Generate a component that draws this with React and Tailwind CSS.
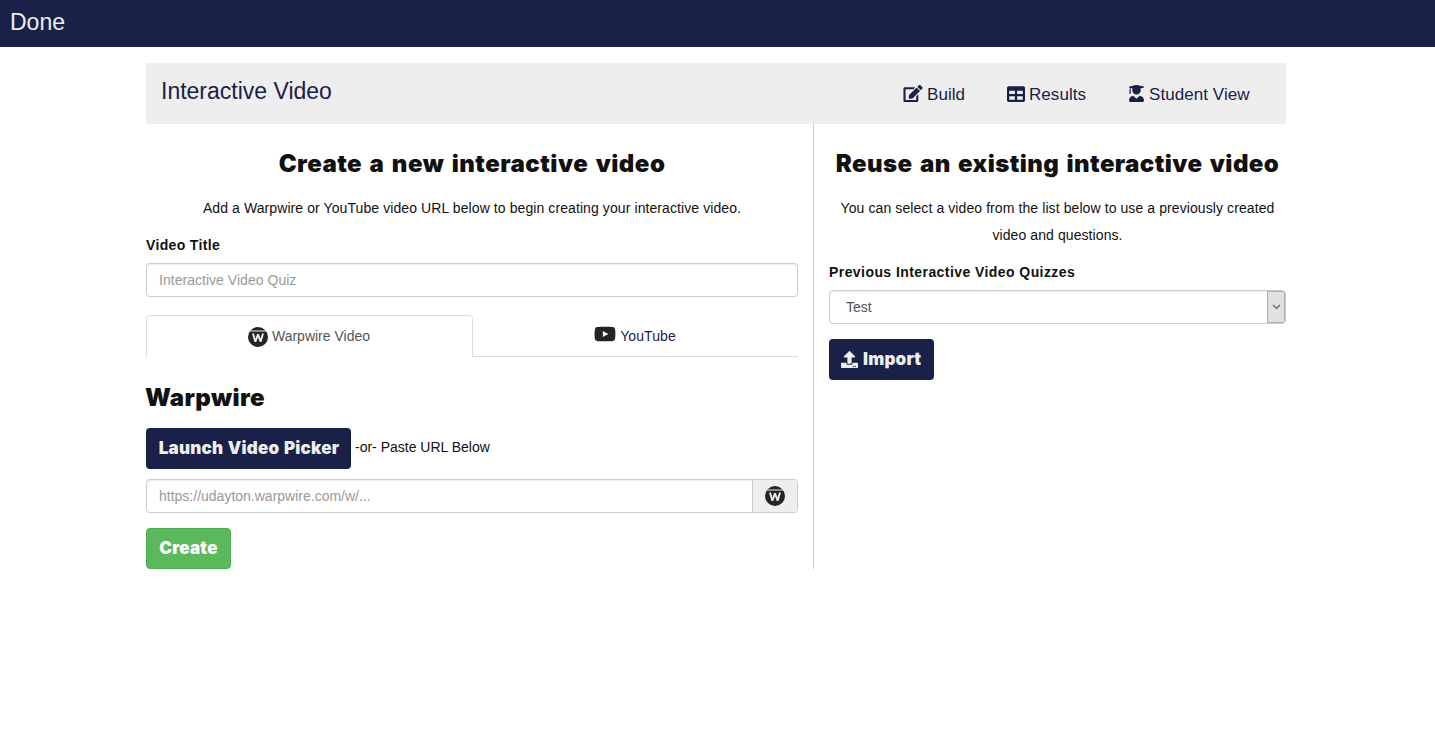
import { FaEdit, FaTable, FaUserGraduate, FaYoutube, FaUpload } from "react-icons/fa";

function WarpwireLogo({ className }) {
  return (
    <svg viewBox="0 0 20 20" className={className} aria-hidden="true">
      <circle cx="10" cy="10" r="10" fill="#242424" />
      <path d="M1.8 4H18.2" stroke="#eeeeee" strokeWidth="1" />
      <path d="M5 6.6L7.4 14.8L10 7.2L12.6 14.8L15 6.6" fill="none" stroke="#eeeeee" strokeWidth="1.9" strokeLinejoin="bevel" />
    </svg>
  );
}

const heavy = "font-['Inter',sans-serif] font-black";

function NavLink({ icon: Icon, label, className, iconClass }) {
  return (
    <a className={`flex items-center gap-[4px] whitespace-nowrap ${className}`}>
      <Icon className={iconClass} />
      <span className="pt-[2px] leading-6 tracking-[0.06px]">{label}</span>
    </a>
  );
}

export default function App() {
  return (
    <div className="font-['Liberation_Sans',Arial,sans-serif] text-sm text-[#111111]">
      <header className="flex h-[47px] bg-[#192149] pl-[10px] pt-[6px] text-[23px] leading-[33px] text-[#eeeeee]">Done</header>
      <main className="ml-[146px] mt-4 w-[1140px]">
        <nav className="flex h-[61px] bg-[#eeeeee] text-[#192149]">
          <h1 className="w-[741px] pl-[15px] pt-[12px] text-[23px] leading-[32px]">Interactive Video</h1>
          <div className="flex pl-[16px] pt-[19px] text-[17px]">
            <NavLink icon={FaEdit} label="Build" className="h-6 w-[104px]" iconClass="mb-px h-[17px] w-[20px]" />
            <NavLink icon={FaTable} label="Results" className="h-6 w-[121px]" iconClass="mb-px h-[18px] w-[18px]" />
            <NavLink icon={FaUserGraduate} label="Student View" className="h-6" iconClass="mb-px h-[17px] w-[17px]" />
          </div>
        </nav>
        <div className="flex">
          <section className="h-[445px] w-[668px] border-r border-[#cccccc] pr-[15px]">
            <h2 className={`${heavy} pt-[22px] text-center text-[24px] leading-[36px] tracking-[0.48px] [word-spacing:2.2px]`}>Create a new interactive video</h2>
            <p className="mt-[13px] text-center leading-[27px] tracking-[0.09px]">Add a Warpwire or YouTube video URL below to begin creating your interactive video.</p>
            <label className="mt-[10px] block font-bold leading-[27px] tracking-[0.35px]">Video Title</label>
            <input className="mt-[4px] block h-[34px] w-full rounded border border-[#cccccc] px-3 tracking-[0.03px] shadow-[inset_0_1px_1px_rgba(0,0,0,0.075)] placeholder:text-[#999999]" placeholder="Interactive Video Quiz" />
            <div className="mt-[18px] flex h-[42px]">
              <div className="flex w-[327px] items-center justify-center gap-[4px] rounded-t border border-b-0 border-[#dddddd] pr-px text-[#555555]">
                <WarpwireLogo className="h-5 w-5" />
                <span className="mb-[2px]">Warpwire Video</span>
              </div>
              <div className="flex flex-1 items-center justify-center gap-[4px] border-b border-[#dddddd] pr-px text-[#192149]">
                <FaYoutube className="mb-[4px] h-[22px] w-[22px] text-[#242424]" />
                <span className="tracking-[0.1px]">YouTube</span>
              </div>
            </div>
            <h2 className={`${heavy} mt-[23px] text-[24px] leading-[36px] tracking-[0.4px]`}><span className="-ml-px">Warpwire</span></h2>
            <div className="mt-[12px] flex h-[41px] items-center gap-[4px]">
              <button className={`${heavy} h-[41px] w-[205px] rounded-[4px] bg-[#192149] pl-px text-[17px] tracking-[0.22px] text-[#eeeeee] [word-spacing:1px]`}>Launch Video Picker</button>
              <span className="mb-[3px]">-or- Paste URL Below</span>
            </div>
            <div className="mt-[10px] flex h-[34px] rounded border border-[#cccccc]">
              <input className="min-w-0 flex-1 rounded-l px-3 shadow-[inset_0_1px_1px_rgba(0,0,0,0.075)] placeholder:text-[#999999]" placeholder="https://udayton.warpwire.com/w/..." />
              <span className="flex w-[45px] items-center justify-center rounded-r border-l border-[#cccccc] bg-[#eeeeee]">
                <WarpwireLogo className="h-5 w-5" />
              </span>
            </div>
            <button className={`${heavy} mt-[15px] block h-[41px] w-[85px] rounded-[4px] border border-[#4cae4c] bg-[#5cb85c] text-[17px] tracking-[0.25px] text-white`}>Create</button>
          </section>
          <section className="w-[472px] pl-[15px]">
            <h2 className={`${heavy} whitespace-nowrap pt-[22px] text-center text-[24px] leading-[36px] tracking-[0.42px] [word-spacing:2.2px]`}>Reuse an existing interactive video</h2>
            <p className="mt-[13px] px-2 text-center leading-[27px] tracking-[0.09px]">You can select a video from the list below to use a previously created video and questions.</p>
            <label className="mt-[10px] block font-bold leading-[27px] tracking-[0.43px]">Previous Interactive Video Quizzes</label>
            <div className="mt-[4px] flex h-[34px] overflow-hidden rounded border border-[#cccccc] text-[#555555] shadow-[inset_0_1px_1px_rgba(0,0,0,0.075)]">
              <span className="flex-1 pl-4 leading-[32px]">Test</span>
              <span className="flex w-[18px] items-center justify-center border border-[#adadad] bg-[#e1e1e1]">
                <svg viewBox="0 0 9 6" className="h-[6px] w-[9px]" fill="none" stroke="#606060" strokeWidth="1.2"><path d="M1 1L4.5 4.5L8 1" /></svg>
              </span>
            </div>
            <button className={`${heavy} mt-[15px] flex h-[41px] w-[105px] items-center gap-[5px] rounded-[4px] bg-[#192149] pl-[12px] text-[17px] tracking-[0.2px] text-[#eeeeee]`}>
              <FaUpload className="h-[17px] w-[17px]" />
              <span>Import</span>
            </button>
          </section>
        </div>
      </main>
    </div>
  );
}
